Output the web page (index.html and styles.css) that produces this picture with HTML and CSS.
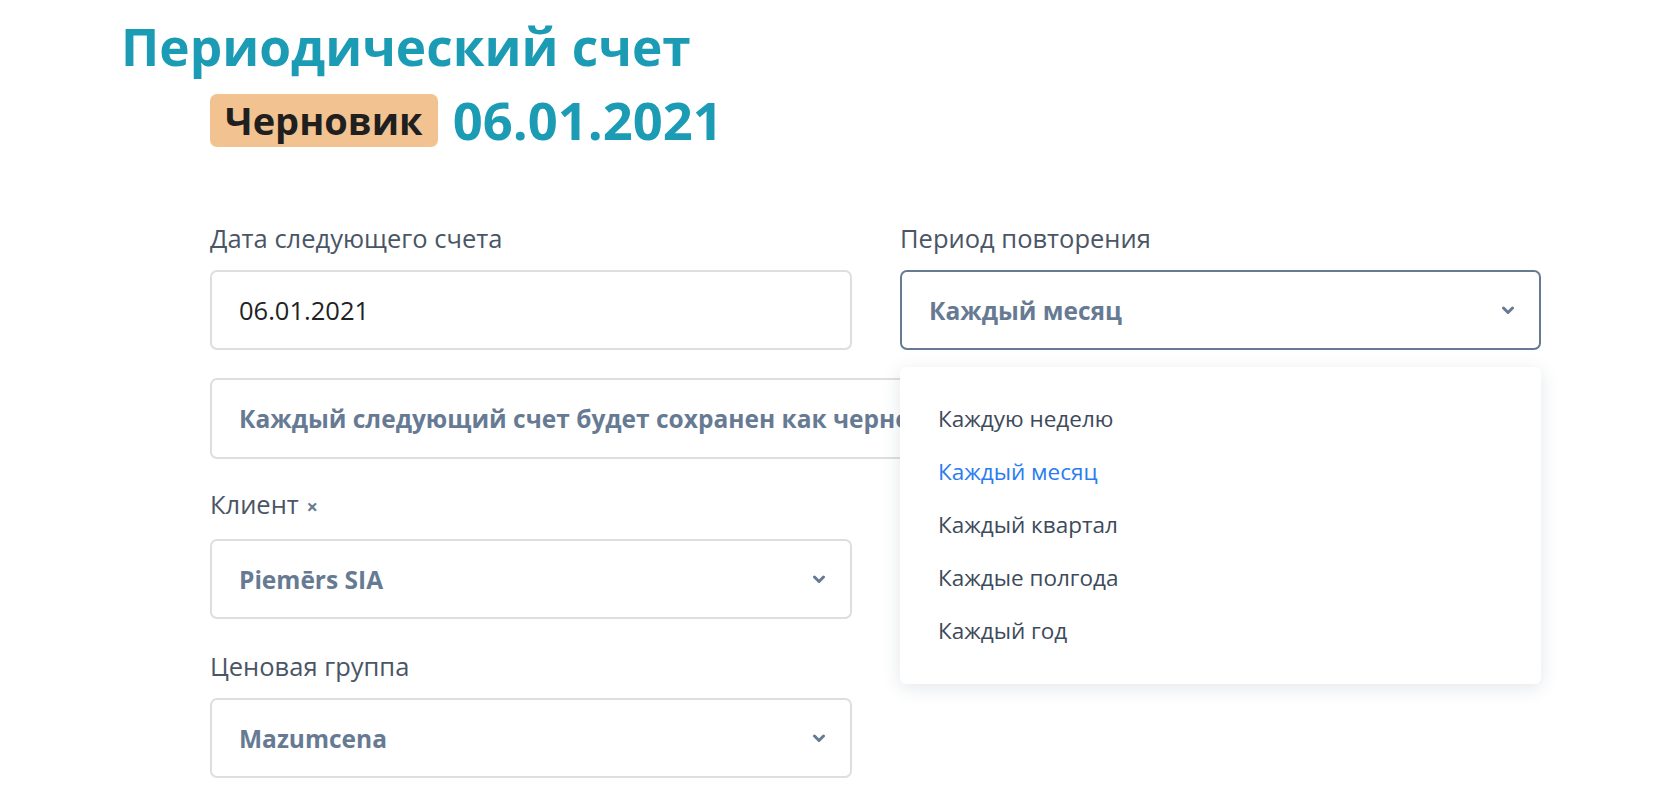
FILE: index.html
```html
<!DOCTYPE html>
<html lang="ru">
<head>
  <meta charset="UTF-8" />
  <meta name="viewport" content="width=device-width, initial-scale=1.0"/>
  <title>Периодический счет</title>
  <link rel="stylesheet" href="styles.css">
</head>
<body>
  <div class="page">
    <h1 class="title">Периодический счет</h1>
    <div class="subtitle">
      <span class="badge">Черновик</span>
      <span class="date">06.01.2021</span>
    </div>

    <div class="form">
      <div class="row top">
        <div class="field">
          <label>Дата следующего счета</label>
          <div class="control">06.01.2021</div>
        </div>
        <div class="field period">
          <label>Период повторения</label>
          <div class="control select active">
            <span>Каждый месяц</span>
            <svg class="chevron" width="14" height="9" viewBox="0 0 14 9"><polyline points="2.5,2 7,6.5 11.5,2" fill="none" stroke="#667b93" stroke-width="3" stroke-linecap="round" stroke-linejoin="round"/></svg>
          </div>
          <ul class="dropdown">
            <li>Каждую неделю</li>
            <li class="selected">Каждый месяц</li>
            <li>Каждый квартал</li>
            <li>Каждые полгода</li>
            <li>Каждый год</li>
          </ul>
        </div>
      </div>

      <div class="control info">Каждый следующий счет будет сохранен как черновик</div>

      <div class="row">
        <div class="field">
          <label>Клиент <span class="clear">×</span></label>
          <div class="control select">
            <span>Piemērs SIA</span>
            <svg class="chevron" width="14" height="9" viewBox="0 0 14 9"><polyline points="2.5,2 7,6.5 11.5,2" fill="none" stroke="#667b93" stroke-width="3" stroke-linecap="round" stroke-linejoin="round"/></svg>
          </div>
        </div>
      </div>

      <div class="row">
        <div class="field">
          <label>Ценовая группа</label>
          <div class="control select">
            <span>Mazumcena</span>
            <svg class="chevron" width="14" height="9" viewBox="0 0 14 9"><polyline points="2.5,2 7,6.5 11.5,2" fill="none" stroke="#667b93" stroke-width="3" stroke-linecap="round" stroke-linejoin="round"/></svg>
          </div>
        </div>
      </div>
    </div>
  </div>
</body>
</html>
```

FILE: styles.css
```css
body {
  margin: 0;
  font-family: 'Open Sans', 'Noto Sans', sans-serif;
  background: #fff;
  color: #4a5566;
}
.page {
  padding: 10px 0 0 121px;
}
.title {
  margin: 0;
  font-size: 51.4px;
  font-weight: 700;
  line-height: 72px;
  color: #1b9bb4;
}
.subtitle {
  display: flex;
  align-items: center;
  gap: 15px;
  height: 54px;
  margin: 11px 0 0 89px;
}
.badge {
  background: #f2c391;
  color: #1f1f1f;
  font-size: 38px;
  font-weight: 700;
  line-height: 53px;
  padding: 0 15px;
  border-radius: 7px;
}
.date {
  font-size: 52.5px;
  font-weight: 700;
  line-height: 54px;
  color: #1b9bb4;
}
.form {
  width: 1331px;
  margin: 74px 0 0 89px;
}
.row {
  display: grid;
  grid-template-columns: 642px 641px;
  gap: 48px;
}
.field {
  position: relative;
  margin-bottom: 30px;
}
.top .field {
  margin-bottom: 28px;
}
.field label {
  display: block;
  font-size: 25.5px;
  line-height: 34px;
  margin-bottom: 15px;
  color: #4a5566;
}
.clear {
  margin-left: 1px;
  font-size: 20px;
  font-weight: 700;
  color: #667b93;
}
.control {
  box-sizing: border-box;
  height: 80px;
  border: 2px solid #dedede;
  border-radius: 7px;
  padding: 0 24px 0 27px;
  display: flex;
  align-items: center;
  font-size: 25.5px;
  color: #222;
}
.select {
  justify-content: space-between;
  font-size: 24.5px;
  font-weight: 700;
  color: #667b93;
}
.select.active {
  border-color: #667a91;
}
.info {
  font-size: 24.5px;
  font-weight: 700;
  color: #667b93;
  height: 81px;
  margin-bottom: 28px;
}
.dropdown {
  position: absolute;
  left: 0;
  right: 0;
  top: 146px;
  margin: 0;
  padding: 25px 0 27px;
  list-style: none;
  background: #fff;
  border-radius: 6px;
  box-shadow: 0 4px 18px rgba(40, 60, 90, 0.13);
  z-index: 10;
}
.dropdown li {
  padding: 0 38px;
  line-height: 53px;
  font-size: 22.5px;
  color: #3d4a5b;
}
.dropdown li.selected {
  color: #2a7cf0;
}
```
